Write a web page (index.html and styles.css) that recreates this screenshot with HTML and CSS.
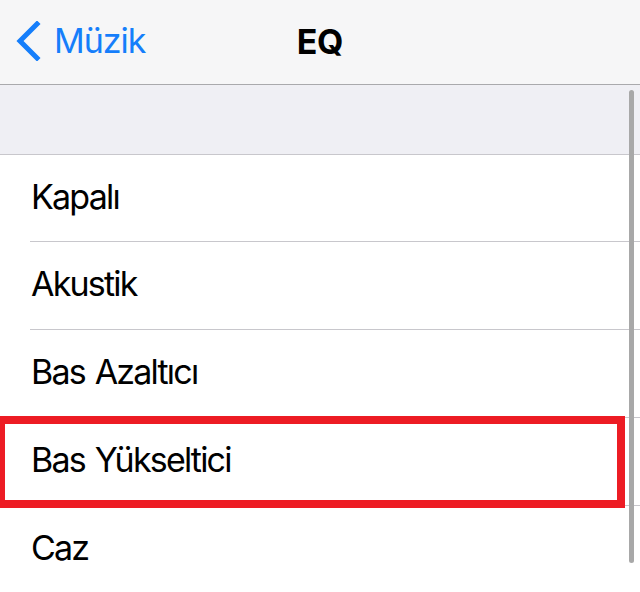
FILE: index.html
```html
<!DOCTYPE html>
<html lang="tr">
<head>
  <meta charset="UTF-8" />
  <meta name="viewport" content="width=device-width, initial-scale=1" />
  <title>EQ</title>
  <link rel="stylesheet" href="styles.css">
</head>
<body>
  <header class="nav-bar">
    <a class="back-link" href="#">
      <svg class="back-chevron" width="30" height="40" viewBox="0 0 30 40">
        <path d="M23 3 L6 20 L23 37" fill="none" stroke="#157efb" stroke-width="5" stroke-linecap="square" stroke-linejoin="miter" />
      </svg>
      <span>Müzik</span>
    </a>
    <h1 class="nav-title">EQ</h1>
  </header>

  <main class="page">
    <div class="section-gap"></div>
    <ul class="eq-list">
      <li class="eq-row">Kapalı</li>
      <li class="eq-row">Akustik</li>
      <li class="eq-row">Bas Azaltıcı</li>
      <li class="eq-row is-marked">Bas Yükseltici<span class="mark-box"></span></li>
      <li class="eq-row">Caz</li>
    </ul>
    <div class="scroll-thumb"></div>
  </main>
</body>
</html>
```

FILE: styles.css
```css
* { margin: 0; padding: 0; box-sizing: border-box; }
body {
  font-family: 'Inter', 'Roboto', sans-serif;
  background: #fff;
  color: #000;
  width: 640px; height: 592px; overflow: hidden;
}
.nav-bar {
  height: 85px; background: #f6f6f7; border-bottom: 1px solid #a9a9ac;
  display: flex; align-items: center; justify-content: center; position: relative;
}
.back-link {
  position: absolute; left: 14px; top: 20px;
  display: flex; align-items: center; gap: 10px;
  color: #157efb; text-decoration: none; font-size: 34px; letter-spacing: -1px;
}
.back-chevron { display: block; }
.nav-title { font-size: 34px; font-weight: 700; letter-spacing: -0.3px; margin-top: -2px; }
.page { position: relative; }
.section-gap { height: 70px; background: #efeff4; border-bottom: 1px solid #c8c7cc; }
.eq-list { list-style: none; padding-left: 30px; }
.eq-row {
  height: 88px; border-bottom: 1px solid #c8c7cc;
  display: flex; align-items: center; padding-left: 1px; padding-bottom: 4px;
  font-size: 34px; letter-spacing: -1.8px; word-spacing: 2px; position: relative;
}
.eq-row:first-child { height: 87px; }
.mark-box {
  position: absolute; left: -33px; top: -2px; width: 628px; height: 92px;
  border: 8px solid #ed1c24;
}
.scroll-thumb {
  position: absolute; right: 6px; top: 5px; width: 5px; height: 473px;
  background: #a8a8a8; border-radius: 3px;
}
```
